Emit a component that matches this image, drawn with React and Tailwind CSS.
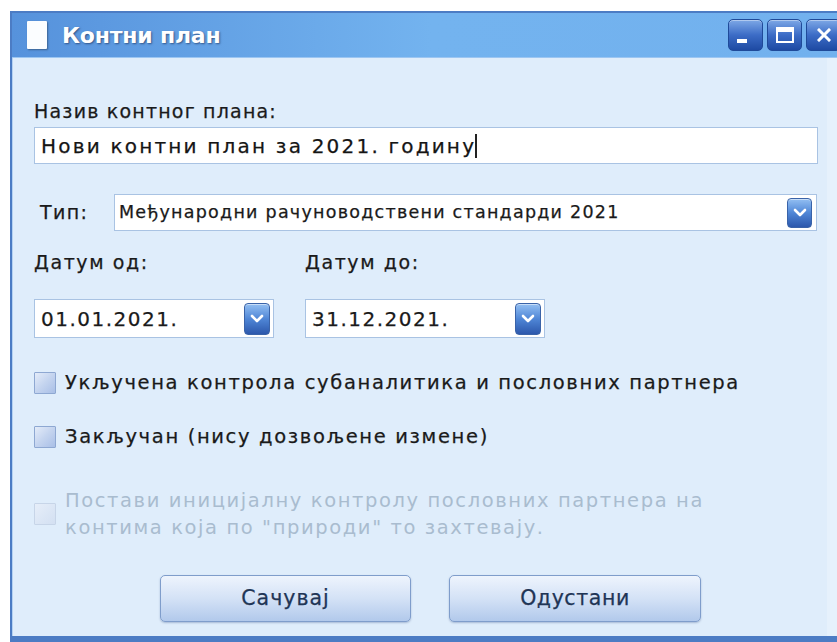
import React from "react";

const FONT = { fontFamily: '"DejaVu Sans", Verdana, sans-serif' };

function DropButton({ className = "" }) {
  return (
    <div
      className={
        "flex items-center justify-center rounded-[4px] border border-[#3a63a8] bg-gradient-to-b from-[#93bff2] via-[#4f86d6] to-[#2d58ac] shadow-[inset_0_1px_0_rgba(255,255,255,0.5)] " +
        className
      }
    >
      <svg width="14" height="10" viewBox="0 0 14 10">
        <path d="M2 2 L7 7 L12 2" fill="none" stroke="white" strokeWidth="2.6" strokeLinecap="round" strokeLinejoin="round" />
      </svg>
    </div>
  );
}

function CheckBox({ disabled }) {
  return (
    <div
      className={
        "w-[22px] h-[22px] shrink-0 border rounded-[1px] " +
        (disabled
          ? "border-[#c7d5e8] bg-gradient-to-br from-[#e6eef9] to-[#d3e0f2]"
          : "border-[#8ea8d2] bg-gradient-to-br from-[#e4ecf9] via-[#c4d4ef] to-[#a9bfe6]")
      }
    />
  );
}

function TitleButton({ children }) {
  return (
    <div className="w-[35px] h-[32px] rounded-[5px] border border-[#1f4a99] bg-gradient-to-b from-[#7ea8e6] via-[#3c6cc6] to-[#1e4aa3] flex items-center justify-center shadow-[inset_0_1px_0_rgba(255,255,255,0.4)]">
      {children}
    </div>
  );
}

export default function App() {
  return (
    <div className="w-[837px] h-[642px] bg-white overflow-hidden pt-[11px] pl-[10px]" style={FONT}>
      <div className="w-[840px] h-[631px] flex flex-col border-l-[2px] border-t-[2px] border-b-[6px] border-[#4c7cc4] bg-[#5f9ce2]">
        {/* title bar */}
        <div className="h-[45px] shrink-0 flex items-center pl-[15px] bg-gradient-to-r from-[#5692dc] via-[#73b3ef] to-[#72b1ee] border-b border-[#9cc6f2]">
          <div className="w-[20px] h-[28px] bg-[#fbfdff] rounded-[1px] shadow-[1px_1px_2px_rgba(0,0,0,0.35)]" />
          <div className="ml-[15px] text-white font-bold text-[22px] tracking-[-0.2px] [text-shadow:1px_1px_2px_rgba(20,40,80,0.6)]">
            Контни план
          </div>
          <div className="ml-auto flex gap-[4px] items-center mr-[9px]">
            <TitleButton>
              <div className="w-[10px] h-[4px] bg-white mt-[12px] mr-[8px]" />
            </TitleButton>
            <TitleButton>
              <div className="w-[18px] h-[16px] border-[2px] border-t-[5px] border-white" />
            </TitleButton>
            <TitleButton>
              <svg width="14" height="14" viewBox="0 0 14 14">
                <path d="M2 2 L12 12 M12 2 L2 12" stroke="white" strokeWidth="3" strokeLinecap="square" />
              </svg>
            </TitleButton>
          </div>
        </div>

        {/* body */}
        <div className="flex-1 flex">
          <div className="w-[815px] bg-[#dfedfb] border-l border-[#b5d2f2] pl-[21px] pr-[10px] pt-[42px] flex flex-col text-[#1a1a1a] [-webkit-text-stroke:0.25px_currentColor]">
            <div className="text-[19px] leading-[22px] tracking-[1.2px]">Назив контног плана:</div>
            <div className="mt-[5px] w-[784px] h-[37px] bg-white border border-[#a9c3e3] flex items-center pl-[6px] text-[20px] tracking-[2.2px] text-[#151515]">
              Нови контни план за 2021. годину
              <span className="inline-block w-[1.5px] h-[24px] bg-[#222] ml-[-1px]" />
            </div>

            <div className="mt-[30px] flex items-center">
              <div className="w-[80px] pl-[6px] text-[19px] tracking-[1.4px]">Тип:</div>
              <div className="w-[704px] h-[37px] bg-white border border-[#a9c3e3] flex items-center pl-[4px] pr-[4px] text-[17.5px] tracking-[1.25px]">
                <span className="flex-1">Међународни рачуноводствени стандарди 2021</span>
                <DropButton className="w-[25px] h-[30px]" />
              </div>
            </div>

            <div className="mt-[20px] flex">
              <div className="w-[271px]">
                <div className="text-[19px] leading-[22px] tracking-[1.6px]">Датум од:</div>
                <div className="mt-[26px] w-[240px] h-[39px] bg-white border border-[#a9c3e3] flex items-center pl-[6px] pr-[3px] text-[20px] tracking-[1.5px]">
                  <span className="flex-1">01.01.2021.</span>
                  <DropButton className="w-[26px] h-[32px]" />
                </div>
              </div>
              <div>
                <div className="text-[19px] leading-[22px] tracking-[1.6px]">Датум до:</div>
                <div className="mt-[26px] w-[240px] h-[39px] bg-white border border-[#a9c3e3] flex items-center pl-[6px] pr-[3px] text-[20px] tracking-[1.5px]">
                  <span className="flex-1">31.12.2021.</span>
                  <DropButton className="w-[26px] h-[32px]" />
                </div>
              </div>
            </div>

            <div className="mt-[33px] flex items-center gap-[9px] text-[19.5px] leading-[24px] tracking-[1.65px]">
              <CheckBox />
              <span>Укључена контрола субаналитика и пословних партнера</span>
            </div>
            <div className="mt-[30px] flex items-center gap-[9px] text-[19.5px] leading-[24px] tracking-[1.65px]">
              <CheckBox />
              <span>Закључан (нису дозвољене измене)</span>
            </div>
            <div className="mt-[38px] flex items-center gap-[9px] text-[19.5px] leading-[27px] tracking-[1.6px] text-[#a9bccf] [-webkit-text-stroke:0px]">
              <CheckBox disabled />
              <span>
                Постави иницијалну контролу пословних партнера на
                <br />
                контима која по "природи" то захтевају.
              </span>
            </div>

            <div className="mt-[34px] flex pl-[126px] gap-[38px]">
              <button className="w-[251px] h-[47px] rounded-[5px] border border-[#7f9dcb] bg-gradient-to-b from-[#eef4fd] via-[#d4e2f6] to-[#b2c9eb] text-[20.5px] text-[#1f3556] tracking-[1px] shadow-[0_1px_2px_rgba(60,90,140,0.35)]">
                Сачувај
              </button>
              <button className="w-[252px] h-[47px] rounded-[5px] border border-[#7f9dcb] bg-gradient-to-b from-[#eef4fd] via-[#d4e2f6] to-[#b2c9eb] text-[20.5px] text-[#1f3556] tracking-[0.6px] shadow-[0_1px_2px_rgba(60,90,140,0.35)]">
                Одустани
              </button>
            </div>
          </div>
          <div className="flex-1 bg-[#e6f1fc]" />
        </div>
      </div>
    </div>
  );
}
